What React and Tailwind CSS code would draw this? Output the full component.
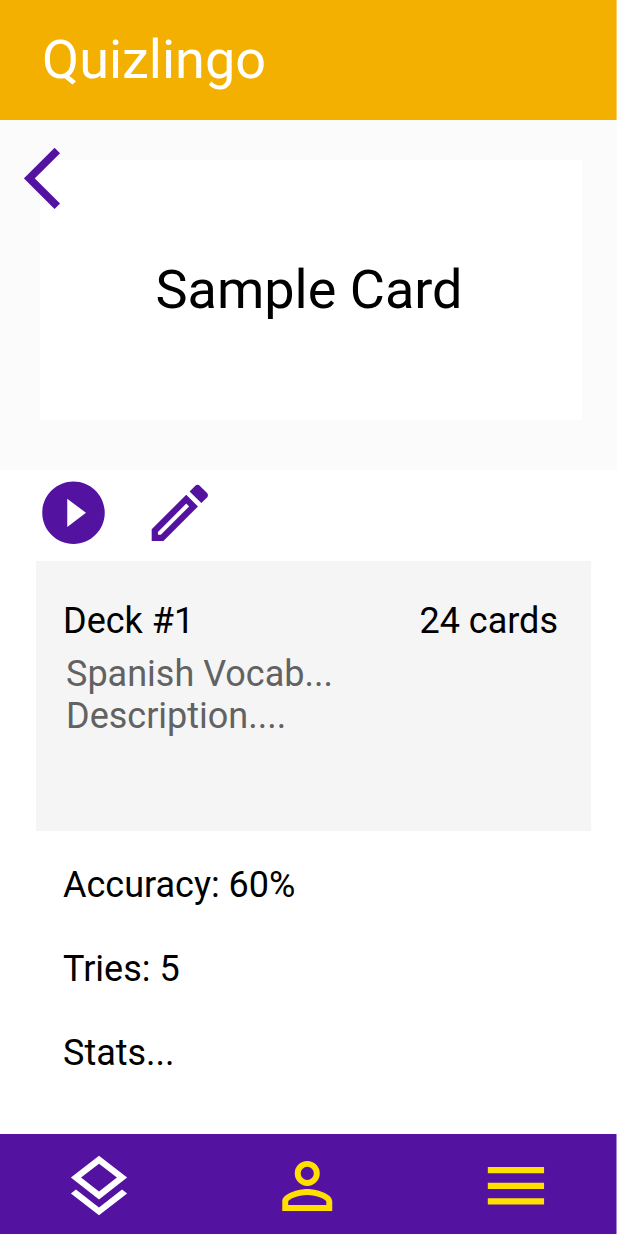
export default function App() {
  return (
    <div className="flex h-[1234px] w-[617px] flex-col overflow-hidden bg-white font-['Roboto',sans-serif] text-black">
      <header className="flex h-[120px] shrink-0 items-center border-r border-white/40 bg-[#f4b000] pb-[2px] pl-[42px] text-[54px] text-white">
        <h1>Quizlingo</h1>
      </header>
      <section className="relative h-[350px] shrink-0 border-r border-white/40 bg-[#fbfbfb] pl-10 pt-10">
        <div className="flex h-[260px] w-[542px] items-center justify-center bg-white pb-[2px] pr-1 text-[54px]">
          <span>Sample Card</span>
        </div>
        <svg className="absolute left-6 top-7" width="37" height="62" viewBox="0 0 37 62" fill="none" stroke="#5313a0" strokeWidth="7.7">
          <path d="M33.3 2.5L5.4 30.4l27.9 27.9" />
        </svg>
      </section>
      <div className="flex h-[91px] shrink-0 items-start">
        <svg className="ml-9 mt-[5px]" width="75" height="75" viewBox="0 -0.1 24 24" fill="#5313a0">
          <path d="M12 2C6.48 2 2 6.48 2 12s4.48 10 10 10 10-4.48 10-10S17.52 2 12 2zm-2 14.5v-9l6 4.5-6 4.5z" />
        </svg>
        <svg className="ml-[31px] mt-[5px]" width="75" height="75" viewBox="-0.1 -0.12 24 24" fill="#5313a0">
          <path d="M14.06 9.02l.92.92L5.92 19H5v-.92l9.06-9.06M17.66 3c-.25 0-.51.1-.7.29l-1.83 1.83 3.75 3.75 1.83-1.83c.39-.39.39-1.02 0-1.41l-2.34-2.34c-.2-.2-.45-.29-.71-.29zm-3.6 3.19L3 17.25V21h3.75L17.81 9.94l-3.75-3.75z" />
        </svg>
      </div>
      <section className="ml-9 h-[270px] w-[555px] shrink-0 bg-[#f5f5f5] pl-[27px] pr-[33px] pt-[39px] text-[36px] leading-[42px]">
        <div className="flex justify-between"><h2>Deck #1</h2><span>24 cards</span></div>
        <p className="ml-[3px] mt-[11px] text-[#626262]">Spanish Vocab...<br />Description....</p>
      </section>
      <section className="flex flex-1 flex-col gap-[42px] pl-[63px] pt-[33px] text-[36px] leading-[42px]">
        <p>Accuracy: 60%</p><p>Tries: 5</p><p>Stats...</p>
      </section>
      <nav className="flex h-[100px] shrink-0 border-r border-white/50 bg-[#5313a0]">
        <svg className="ml-[61px] mt-[15px]" width="75" height="75" viewBox="-0.16 -0.15 24 24" fill="white">
          <path d="M11.99 18.54l-7.37-5.73L3 14.07l9 7 9-7-1.63-1.27-7.38 5.74zM12 16l7.36-5.73L21 9l-9-7-9 7 1.63 1.27L12 16zm0-11.47L17.74 9 12 13.47 6.26 9 12 4.53z" />
        </svg>
        <svg className="ml-[134px] mt-[14px]" width="75" height="75" viewBox="0.08 -0.12 24 24" fill="#ffdf00">
          <path d="M12 5.9a2.1 2.1 0 110 4.2 2.1 2.1 0 010-4.2m0 9c2.97 0 6.1 1.46 6.1 2.1v1.1H5.9V17c0-.64 3.13-2.1 6.1-2.1M12 4a4 4 0 100 8 4 4 0 000-8zm0 9c-2.67 0-8 1.34-8 4v3h16v-3c0-2.66-5.33-4-8-4z" />
        </svg>
        <svg className="ml-[134px] mt-[14px]" width="75" height="75" viewBox="0.18 -0.08 24 24" fill="#ffdf00">
          <path d="M3 18h18v-2H3v2zm0-5h18v-2H3v2zm0-7v2h18V6H3z" />
        </svg>
      </nav>
    </div>
  );
}
